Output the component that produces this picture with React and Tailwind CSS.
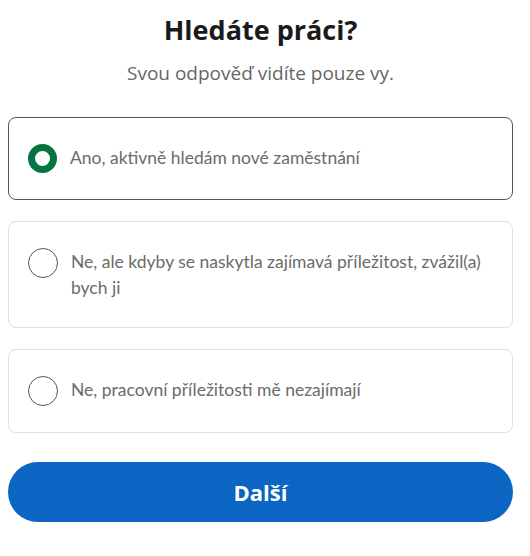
import React, { useState } from 'react'

const options = [
  'Ano, aktivně hledám nové zaměstnání',
  'Ne, ale kdyby se naskytla zajímavá příležitost, zvážil(a) bych ji',
  'Ne, pracovní příležitosti mě nezajímají',
]

function Radio({ checked }) {
  if (checked) {
    return <span className="block w-[29px] h-[29px] shrink-0 rounded-full border-[7px] border-[#057642] bg-white" />
  }
  return <span className="block w-[30px] h-[30px] shrink-0 rounded-full border-[1.5px] border-[#555]" />
}

export default function App() {
  const [selected, setSelected] = useState(0)

  return (
    <div className="w-[530px] h-[556px] bg-white font-['Open_Sans',sans-serif]">
      <div className="w-[513px] pl-2 pt-[11px]">
        <h1 className="text-center text-[27px] leading-[38px] font-bold text-[#1a1a1a]">Hledáte práci?</h1>
        <p className="text-center text-[19px] leading-6 text-[#666] mt-[12px]">Svou odpověď vidíte pouze vy.</p>

        <div className="mt-[32px] flex flex-col gap-[21px]">
          {options.map((label, i) => (
            <button
              key={i}
              onClick={() => setSelected(i)}
              className={`text-left flex items-start gap-[13px] pl-[19px] pr-2 py-[26px] rounded-lg ${
                selected === i
                  ? 'border-[1.5px] border-[#555]'
                  : 'border border-[#e0e0e0]'
              }`}
            >
              <Radio checked={selected === i} />
              <span className="font-['Lato',sans-serif] text-[17.5px] leading-[26px] text-[#6b6b6b] pt-[1px]">{label}</span>
            </button>
          ))}
        </div>

        <button className="w-full mt-[29px] h-[60px] rounded-full bg-[#0a66c2] text-white text-[22px] font-bold">
          Další
        </button>
      </div>
    </div>
  )
}
